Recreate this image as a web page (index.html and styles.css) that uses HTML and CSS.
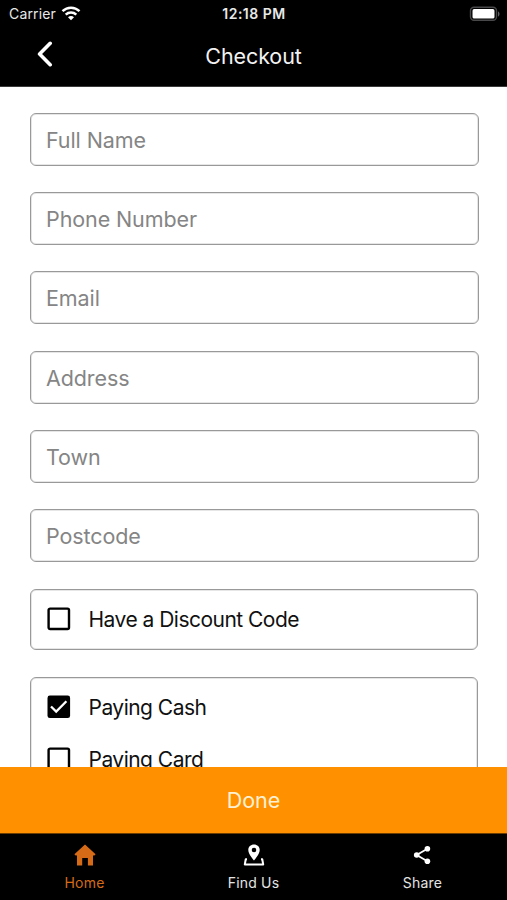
FILE: index.html
```html
<!DOCTYPE html>
<html lang="en">
<head>
<meta charset="utf-8">
<title>Checkout</title>
<link rel="stylesheet" href="styles.css">
</head>
<body>
<div class="app">
  <header class="header">
    <div class="status">
      <div class="carrier"><span class="carrier-name">Carrier</span>
        <svg class="wifi" viewBox="0 0 20 15"><g fill="none" stroke="#fff" stroke-width="2.5"><path d="M1.5 5.2C6.4.6 13.6.6 18.500 5.2"/><path d="M4.7 8.6c3-2.8 7.6-2.8 10.6 0"/></g><path fill="#fff" d="M7 11.2c1.8-1.5 4.2-1.5 6 0l-3 3z"/></svg>
      </div>
      <div class="clock">12:18 PM</div>
      <svg class="battery" viewBox="0 0 32 16"><rect x="1.5" y="1.2" width="26" height="13" rx="3.5" fill="#000" stroke="#48484a" stroke-width="1.4"/><rect x="3.5" y="3.1" width="22" height="9.4" rx="1.6" fill="#fff"/><path d="M29 5.500c2 .6 2 4.4 0 5z" fill="#606062"/></svg>
    </div>
    <div class="nav">
      <svg class="back" viewBox="0 0 16 26"><path d="M13.2 2.3 2.6 13l10.6 10.7" fill="none" stroke="#fff" stroke-width="3.6" stroke-linecap="round" stroke-linejoin="round"/></svg>
      <h1 class="title">Checkout</h1>
      <span></span>
    </div>
  </header>
  <main class="form">
    <div class="field"><span>Full Name</span></div>
    <div class="field"><span>Phone Number</span></div>
    <div class="field"><span>Email</span></div>
    <div class="field"><span>Address</span></div>
    <div class="field"><span>Town</span></div>
    <div class="field"><span>Postcode</span></div>
    <div class="options">
      <div class="option"><svg class="check" viewBox="0 0 24 24"><rect x="1.6" y="1.6" width="20.4" height="20.4" rx="1.5" fill="none" stroke="#000" stroke-width="2.4"/></svg><span>Have a Discount Code</span></div>
    </div>
    <div class="options">
      <div class="option"><svg class="check" viewBox="0 0 24 24"><rect x=".5" y=".5" width="22.6" height="22.6" rx="2.4"/><path d="m4 11.500 5.2 5.1L19.4 6.3" fill="none" stroke="#fff" stroke-width="2.3"/></svg><span>Paying Cash</span></div>
      <div class="option"><svg class="check" viewBox="0 0 24 24"><rect x="1.6" y="1.6" width="20.4" height="20.4" rx="1.5" fill="none" stroke="#000" stroke-width="2.4"/></svg><span>Paying Card</span></div>
    </div>
  </main>
  <div class="done"><span>Done</span></div>
  <nav class="tabs">
    <div class="tab active"><svg class="icon" viewBox="0 0 24 24"><path fill="currentColor" d="M12 1.5 22.6 11.2 21.4 12.4H20V22.6H14.9V15H9.2V22.6H4V12.4H2.6L1.4 11.2z"/></svg><span>Home</span></div>
    <div class="tab"><svg class="icon" viewBox="0 0 24 24"><path fill="#fff" fill-rule="evenodd" d="M12 1.500c-3.300 0-5.700 2.300-5.700 5.500C6.300 11.200 12 17.600 12 17.600s5.700-6.400 5.700-10.600c0-3.200-2.400-5.500-5.700-5.500zm0 3.200a2.300 2.300 0 1 1 0 4.600 2.300 2.300 0 0 1 0-4.600z"/><path d="M5 16.300H3.700L2.800 21.500H21.200L20.300 16.300H19" fill="none" stroke="#fff" stroke-width="2" stroke-linejoin="round"/></svg><span>Find Us</span></div>
    <div class="tab share"><svg class="icon" viewBox="0 0 24 24"><path d="M18.400 5.800 7.700 12l10.700 6.200" fill="none" stroke="#fff" stroke-width="1.800"/><g fill="#fff"><circle cx="18.400" cy="5.800" r="2.800"/><circle cx="7.700" cy="12" r="2.800"/><circle cx="18.400" cy="18.200" r="2.800"/></g></svg><span>Share</span></div>
  </nav>
</div>
</body>
</html>
```
FILE: styles.css
```css
* { box-sizing: border-box; }
body { margin: 0; font-family: Inter, "Liberation Sans", sans-serif; background: #fff; }
svg { display: block; flex: none; }
.app { width: 507px; height: 900px; display: flex; flex-direction: column; overflow: hidden; }
.header { height: 86.500px; flex: none; background: #000; color: #fff; border-bottom: 1px solid #3a3a3a; }
.status { height: 27px; display: grid; grid-template-columns: 1fr auto 1fr; align-items: center; padding: 0 6px 0 9px; color: #e8e8e8; }
.carrier { display: flex; align-items: center; gap: 5px; font-size: 14px; letter-spacing: .15px; }
.wifi { width: 20px; height: 15px; }
.clock { font-size: 14px; font-weight: 600; letter-spacing: .5px; position: relative; left: -1px; }
.battery { width: 32px; height: 16px; justify-self: end; }
.nav { height: 57px; display: grid; grid-template-columns: 1fr auto 1fr; align-items: center; padding: 0 37px 3px; }
.back { width: 16px; height: 26px; margin-top: -1px; }
.title { margin: 4px 0 0; font-size: 21.500px; font-weight: 400; letter-spacing: -.1px; color: #f2f2f2; }
.form { flex: 1; min-height: 0; overflow: hidden; padding: 26.400px 28px 0 30px; }
.field { height: 53px; margin-bottom: 26.300px; border: 1px solid #999; box-shadow: inset 0 0 0 1px #e6e6e6; border-radius: 6px; display: flex; align-items: center; padding: 1px 15px 0; font-size: 21.500px; letter-spacing: -.1px; color: #858585; }
.options { width: 448px; margin-bottom: 27px; border: 1px solid #999; box-shadow: inset 0 0 0 1px #e6e6e6; border-radius: 6px; padding: 3px 15.500px 4px; }
.option { height: 52px; display: flex; align-items: center; gap: 18px; font-size: 21px; letter-spacing: -.52px; color: #111; }
.option span { margin-top: 1px; }
.check { width: 24px; height: 24px; margin-top: 0; }
.done { height: 67px; flex: none; background: #ff9100; color: #fff1d2; display: flex; align-items: center; justify-content: center; font-size: 21.500px; border-bottom: 1px solid #6b3d00; }
.tabs { height: 66px; flex: none; background: #000; display: grid; grid-template-columns: repeat(3, 1fr); color: #e4e4e4; }
.tab { display: flex; flex-direction: column; align-items: center; padding-top: 9px; gap: 7px; font-size: 14px; line-height: 18px; letter-spacing: .2px; }
.tab.active { color: #d66b17; }
.share .icon { margin-right: 3px; }
.icon { width: 24px; height: 24px; }
```
